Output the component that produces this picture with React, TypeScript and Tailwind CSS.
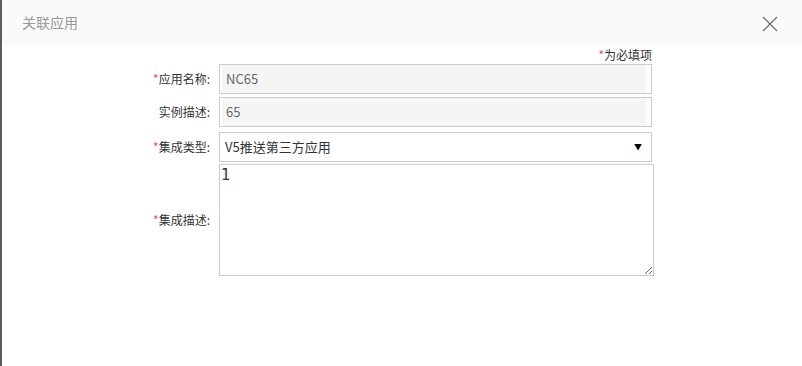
const labelCls =
  "w-[217px] pr-[9px] text-right text-[12px] text-[#333] leading-none";

const Req = () => <span className="text-[#f05050]">*</span>;

const App = () => {
  return (
    <div
      className="flex h-[366px] w-[802px] bg-white"
      style={{ fontFamily: '"Noto Sans CJK SC", "Noto Sans", sans-serif' }}
    >
      <div className="w-[2px] bg-[#5c5c5c]" />
      <div className="flex flex-1 flex-col">
        <div className="flex h-[45px] items-center justify-between bg-[#fafafa] pl-[20px] pr-[24px]">
          <span className="text-[14px] text-[#999]">关联应用</span>
          <svg width="16" height="16" viewBox="0 0 16 16" className="mt-[2px]">
            <path d="M1 1 L15 15 M15 1 L1 15" stroke="#666" strokeWidth="1.1" />
          </svg>
        </div>

        <div className="flex w-[650px] justify-end pt-[2px] text-[12px] leading-[16px] text-[#333]">
          <span>
            <Req />为必填项
          </span>
        </div>

        <div className="mt-[1px] flex items-center">
          <div className={labelCls}>
            <Req />应用名称:
          </div>
          <div className="flex h-[30px] w-[433px] border border-[#ccc] bg-white pl-[2px] pr-[5px]">
            <div className="flex flex-1 items-center bg-[#f5f5f5] pl-[4px] text-[13px] text-[#666]">
              NC65
            </div>
          </div>
        </div>

        <div className="mt-[3px] flex items-center">
          <div className={labelCls}>实例描述:</div>
          <div className="flex h-[30px] w-[433px] border border-[#ccc] bg-white pl-[2px] pr-[5px]">
            <div className="flex flex-1 items-center bg-[#f5f5f5] pl-[4px] text-[13px] text-[#666]">
              65
            </div>
          </div>
        </div>

        <div className="mt-[5px] flex items-center">
          <div className={labelCls}>
            <Req />集成类型:
          </div>
          <div className="flex h-[30px] w-[433px] items-center justify-between border border-[#ccc] bg-white pl-[5px] pr-[9px]">
            <span className="text-[13px] text-[#333]">V5推送第三方应用</span>
            <span className="text-[8px] text-black">▼</span>
          </div>
        </div>

        <div className="mt-[2px] flex items-center">
          <div className={labelCls}>
            <Req />集成描述:
          </div>
          <textarea
            defaultValue="1"
            className="h-[112px] w-[435px] border border-[#ccc] bg-white px-[1px] py-0 text-[15px] leading-[20px] text-[#333] outline-none"
            style={{ fontFamily: '"DejaVu Sans", sans-serif', resize: "both" }}
          />
        </div>
      </div>
    </div>
  );
};

export default App;
